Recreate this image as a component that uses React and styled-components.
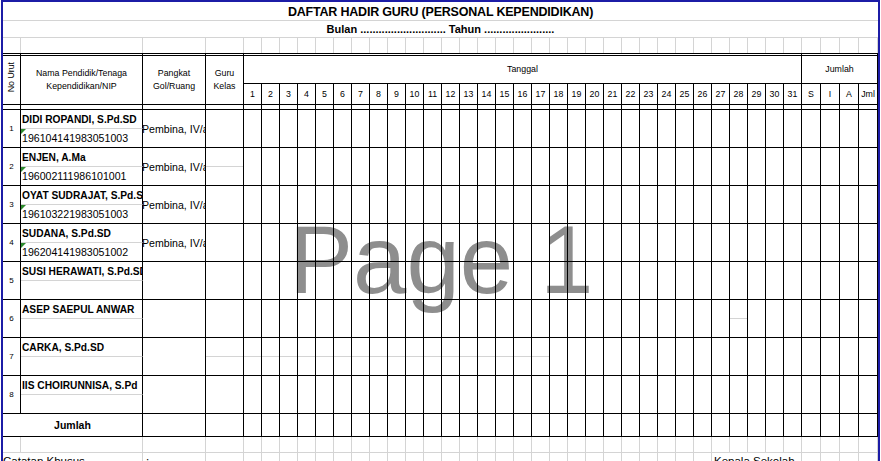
import React from 'react';
import styled, { createGlobalStyle, css } from 'styled-components';

const GRID = '#d4d4d4';
const INK = '#000';
const PAGE_BLUE = '#1c1ca6';
const COLS = '18px 122px 63px 38px repeat(31, 18px) 19px 19px 19px 19px';

const days = Array.from({ length: 31 }, (_, i) => i + 1);
const tally = ['S', 'I', 'A', 'Jml'];
const allCols = Array.from({ length: 39 }, (_, i) => i + 1);

const teachers = [
  { no: 1, name: 'DIDI ROPANDI, S.Pd.SD', nip: '196104141983051003', rank: 'Pembina, IV/a' },
  { no: 2, name: 'ENJEN, A.Ma', nip: '196002111986101001', rank: 'Pembina, IV/a', guruMid: true },
  { no: 3, name: 'OYAT SUDRAJAT, S.Pd.SD', nip: '196103221983051003', rank: 'Pembina, IV/a' },
  { no: 4, name: 'SUDANA, S.Pd.SD', nip: '196204141983051002', rank: 'Pembina, IV/a' },
  { no: 5, name: 'SUSI HERAWATI, S.Pd.SD' },
  { no: 6, name: 'ASEP SAEPUL ANWAR', dayMid: [28] },
  { no: 7, name: 'CARKA, S.Pd.SD', guruMid: true, dayMid: days.slice(0, 17) },
  { no: 8, name: 'IIS CHOIRUNNISA, S.Pd' },
];

export default function App() {
  return (
    <>
      <GlobalStyle />
      <Viewport>
        <Page>
          <Watermark>Page 1</Watermark>

          <Banner>DAFTAR HADIR GURU (PERSONAL KEPENDIDIKAN)</Banner>
          <SubBanner>
            Bulan ............................ Tahun .......................
          </SubBanner>

          <Band $rows="15px">
            {allCols.map((c) => (
              <GridCell key={c} $open />
            ))}
          </Band>

          {/* header */}
          <Band $rows="31px 21px">
            <HeadCell $col="1" $row="1 / 3" $pad="0 0 5px">
              <VerticalLabel>No Urut</VerticalLabel>
            </HeadCell>
            <HeadCell $col="2" $row="1 / 3">
              Nama Pendidik/Tenaga
              <br />
              Kependidikan/NIP
            </HeadCell>
            <HeadCell $col="3" $row="1 / 3">
              Pangkat
              <br />
              Gol/Ruang
            </HeadCell>
            <HeadCell $col="4" $row="1 / 3">
              Guru
              <br />
              Kelas
            </HeadCell>
            <HeadCell $col="5 / span 31" $row="1">
              Tanggal
            </HeadCell>
            <HeadCell $col="36 / span 4" $row="1">
              Jumlah
            </HeadCell>
            {days.map((d) => (
              <NumberCell key={d} $col={4 + d}>
                {d}
              </NumberCell>
            ))}
            {tally.map((t, i) => (
              <NumberCell key={t} $col={36 + i}>
                {t}
              </NumberCell>
            ))}
          </Band>

          <Band $rows="5px">
            {allCols.map((c) => (
              <LineCell key={c} />
            ))}
          </Band>

          {teachers.map((t) => (
            <TeacherRow key={t.no} teacher={t} />
          ))}

          <Band $rows="23px">
            <TotalLabel>Jumlah</TotalLabel>
            {allCols.slice(2).map((c) => (
              <LineCell key={c} />
            ))}
          </Band>

          <Band $rows="16px">
            {allCols.map((c) => (
              <GridCell key={c} />
            ))}
          </Band>

          <Band $rows="20px">
            <NoteCell $col="1 / span 2">Catatan Khusus</NoteCell>
            <NoteCell $col="3" $indent="3px">:</NoteCell>
            {allCols.slice(3, 30).map((c) => (
              <GridCell key={c} />
            ))}
            <NoteCell $col="31 / span 5" $indent="2px">
              Kepala Sekolah
            </NoteCell>
            {allCols.slice(35).map((c) => (
              <GridCell key={c} />
            ))}
          </Band>
        </Page>
      </Viewport>
    </>
  );
}

function TeacherRow({ teacher }) {
  const { no, name, nip, rank, guruMid, dayMid = [] } = teacher;
  return (
    <Band $rows="19px 19px">
      <NoCell>{no}</NoCell>
      <NameCell>{name}</NameCell>
      <NipCell $flag={!!nip}>{nip}</NipCell>
      <RankCell>{rank}</RankCell>
      <MarkCell $col={4} $mid={guruMid} />
      {days.map((d) => (
        <MarkCell key={d} $col={4 + d} $mid={dayMid.includes(d)} />
      ))}
      {tally.map((x, i) => (
        <MarkCell key={x} $col={36 + i} />
      ))}
    </Band>
  );
}

// styled-components
const GlobalStyle = createGlobalStyle`
  html, body {
    margin: 0;
    padding: 0;
    background: #fff;
    overflow: hidden;
  }
  body {
    font-family: 'Liberation Sans', Arial, sans-serif;
    color: #000;
  }
`;

const Viewport = styled.div`
  width: 881px;
  height: 461px;
  overflow: hidden;
  background: #fff;
`;

const Page = styled.div`
  position: relative;
  box-sizing: border-box;
  width: 879px;
  margin-left: 1px;
  border: 2px solid ${PAGE_BLUE};
  border-bottom: none;
`;

const Watermark = styled.div`
  position: absolute;
  left: 286px;
  top: 209px;
  z-index: 0;
  font-family: 'Liberation Sans', Arial, sans-serif;
  font-size: 96px;
  line-height: 97px;
  color: #8e8e8e;
  white-space: nowrap;
  pointer-events: none;
`;

const Banner = styled.div`
  position: relative;
  z-index: 1;
  box-sizing: border-box;
  height: 19px;
  padding-top: 1px;
  border-bottom: 1px solid ${GRID};
  text-align: center;
  font-weight: bold;
  font-size: 12.5px;
  line-height: 18px;
  letter-spacing: -0.2px;
`;

const SubBanner = styled(Banner)`
  height: 17px;
  padding-top: 0;
  font-size: 11px;
  line-height: 16px;
  letter-spacing: 0;
`;

const Band = styled.div`
  position: relative;
  z-index: 1;
  display: grid;
  grid-template-columns: ${COLS};
  grid-template-rows: ${(p) => p.$rows};
`;

const cellBase = css`
  box-sizing: border-box;
  min-width: 0;
  overflow: hidden;
  display: flex;
  align-items: center;
  justify-content: center;
  white-space: nowrap;
`;

const GridCell = styled.div`
  ${cellBase};
  border-right: 1px solid ${GRID};
  border-bottom: ${(p) => (p.$open ? 'none' : `1px solid ${GRID}`)};
`;

const LineCell = styled.div`
  ${cellBase};
  border-right: 1px solid ${INK};
  border-bottom: 1px solid ${INK};
`;

const HeadCell = styled(LineCell)`
  grid-column: ${(p) => p.$col};
  grid-row: ${(p) => p.$row};
  border-top: 3px double ${INK};
  padding: ${(p) => p.$pad || '0'};
  text-align: center;
  font-size: 8.8px;
  line-height: 13px;
`;

const VerticalLabel = styled.span`
  writing-mode: vertical-rl;
  transform: rotate(180deg);
`;

const NumberCell = styled(LineCell)`
  grid-column: ${(p) => p.$col};
  grid-row: 2;
  font-size: 8.8px;
`;

const NoCell = styled(LineCell)`
  grid-column: 1;
  grid-row: 1 / 3;
  font-size: 8px;
`;

const NameCell = styled.div`
  ${cellBase};
  grid-column: 2;
  grid-row: 1;
  align-items: flex-end;
  justify-content: flex-start;
  padding: 0 0 2px 1px;
  border-right: 1px solid ${INK};
  border-bottom: 1px solid ${GRID};
  font-weight: bold;
  font-size: 10.2px;
  line-height: 12px;
`;

const NipCell = styled(LineCell)`
  position: relative;
  grid-column: 2;
  grid-row: 2;
  align-items: flex-end;
  justify-content: flex-start;
  padding: 0 0 3px 1px;
  font-size: 10.6px;
  line-height: 12px;

  ${(p) =>
    p.$flag &&
    css`
      &::before {
        content: '';
        position: absolute;
        left: 0;
        top: 0;
        border-top: 5px solid #2e8b2e;
        border-right: 5px solid transparent;
      }
    `}
`;

const RankCell = styled(LineCell)`
  grid-column: 3;
  grid-row: 1 / 3;
  justify-content: flex-start;
  text-indent: -1px;
  font-size: 10.6px;
`;

const MarkCell = styled(LineCell)`
  grid-column: ${(p) => p.$col};
  grid-row: 1 / 3;
  ${(p) =>
    p.$mid &&
    css`
      background: linear-gradient(${GRID}, ${GRID}) 0 18px / 100% 1px no-repeat;
    `}
`;

const TotalLabel = styled(LineCell)`
  grid-column: 1 / span 2;
  font-weight: bold;
  font-size: 10.5px;
`;

const NoteCell = styled.div`
  ${cellBase};
  grid-column: ${(p) => p.$col};
  align-items: flex-start;
  justify-content: flex-start;
  padding: 1px 0 0 ${(p) => p.$indent || '0'};
  border-right: 1px solid ${GRID};
  font-size: 11.5px;
  line-height: 14px;
`;
